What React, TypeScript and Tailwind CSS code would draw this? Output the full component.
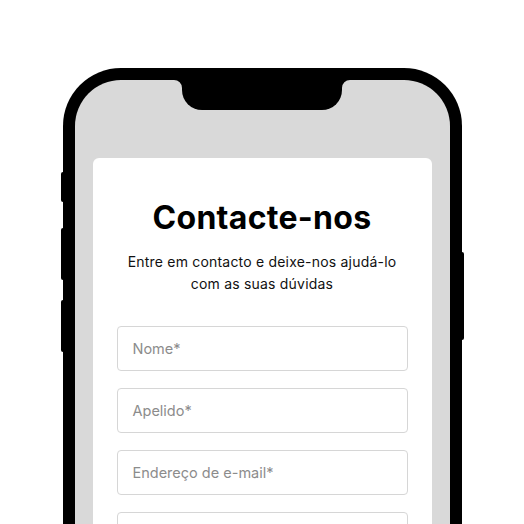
import React from "react";

export default function App() {
  const fields = ["Nome*", "Apelido*", "Endereço de e-mail*", ""];
  return (
    <div
      className="relative w-[524px] h-[524px] overflow-hidden bg-white"
      style={{ fontFamily: "Inter, 'Noto Sans', sans-serif" }}
    >
      <div className="pt-[68px] flex justify-center">
        <div className="relative w-[399px] h-[600px]">
          {/* side buttons */}
          <div className="absolute left-[-2px] top-[104px] w-[4px] h-[30px] bg-black rounded-l-[2px]" />
          <div className="absolute left-[-2px] top-[160px] w-[4px] h-[52px] bg-black rounded-l-[2px]" />
          <div className="absolute left-[-2px] top-[232px] w-[4px] h-[52px] bg-black rounded-l-[2px]" />
          <div className="absolute right-[-2px] top-[184px] w-[4px] h-[88px] bg-black rounded-r-[2px]" />
          {/* body */}
          <div className="relative h-full bg-black rounded-[58px] p-[12px]">
            <div className="relative h-full bg-[#d9d9d9] rounded-[46px] px-[18px] pt-[78px]">
              {/* notch */}
              <div className="absolute left-[107px] top-[-12px] w-[160px] h-[42px] bg-black rounded-b-[20px]" />
              <svg
                className="absolute left-[99px] top-0"
                width="8"
                height="8"
                viewBox="0 0 8 8"
              >
                <path d="M0 0 H8 V8 A8 8 0 0 0 0 0 Z" fill="#000" />
              </svg>
              <svg
                className="absolute left-[267px] top-0"
                width="8"
                height="8"
                viewBox="0 0 8 8"
              >
                <path d="M0 0 H8 A8 8 0 0 0 0 8 Z" fill="#000" />
              </svg>
              {/* card */}
              <div className="h-[400px] bg-white rounded-[6px] px-[24px] pt-[38px] flex flex-col items-center">
                <h1 className="text-[32px] leading-[44px] font-bold text-black tracking-[0.3px]">
                  Contacte-nos
                </h1>
                <p className="mt-[11px] text-[14px] leading-[22px] text-[#111] text-center tracking-[0.2px]">
                  Entre em contacto e deixe-nos ajudá-lo
                  <br />
                  com as suas dúvidas
                </p>
                <div className="mt-[31px] w-full flex flex-col gap-[17px]">
                  {fields.map((f, i) => (
                    <div
                      key={i}
                      className="h-[45px] w-full border border-[#d6d6d6] rounded-[4px] px-[15px] flex items-center text-[14.5px] text-[#8c8c8c]"
                    >
                      {f}
                    </div>
                  ))}
                </div>
              </div>
            </div>
          </div>
        </div>
      </div>
    </div>
  );
}
